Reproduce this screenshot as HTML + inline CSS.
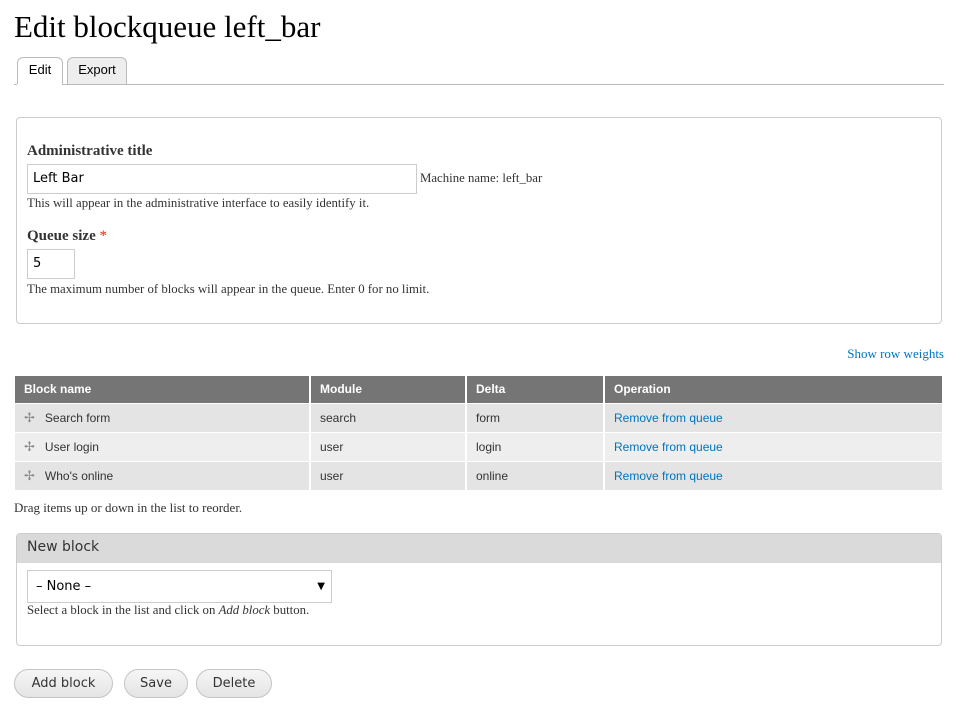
<!DOCTYPE html>
<html><head><meta charset="utf-8"><style>
*{box-sizing:border-box;margin:0;padding:0}
body{width:963px;height:711px;background:#fff;position:relative;font-family:"Liberation Serif",serif;color:#333;overflow:hidden}
.a{position:absolute}
h1{position:absolute;left:14px;top:9px;font-weight:normal;font-size:31px;color:#000;font-family:"Liberation Serif",serif}
.tab{position:absolute;top:57px;height:28px;border:1px solid #bbb;border-bottom:none;border-radius:6px 6px 0 0;font:13px "Liberation Sans",sans-serif;color:#000;text-align:center;line-height:24px}
.fs{position:absolute;border:1px solid #ccc;border-radius:4px}
.lbl{font-weight:bold;font-size:15px;color:#333}
.d{font-size:12.8px;color:#333}
.inp{position:absolute;border:1px solid #ccc;background:#fff;font:13px "DejaVu Sans",sans-serif;color:#000;padding-left:5px;line-height:27px}
table{position:absolute;left:15px;top:376px;width:927px;border-collapse:collapse;font:12px "Liberation Sans",sans-serif}
th{background:#757575;color:#fff;text-align:left;height:27px;padding-left:9px;border-right:2px solid #fff;border-bottom:1px solid #fff}
td{height:29px;padding-left:9px;border-right:2px solid #fff;border-bottom:1px solid #fff;color:#333}
th:last-child,td:last-child{border-right:none}
tr.o td{background:#e4e4e4}tr.e td{background:#eeeeee}
a{color:#0074bd;text-decoration:none}
.btn{position:absolute;top:669px;height:29px;border:1px solid #c4c4c4;border-radius:15px;background:linear-gradient(#f6f6f6,#e4e4e4);font:13px "DejaVu Sans",sans-serif;color:#333;text-align:center;line-height:27px}
</style></head><body>
<h1>Edit blockqueue left_bar</h1>
<div class="tab" style="left:17px;width:46px;background:#fff;height:28px">Edit</div>
<div class="tab" style="left:67px;width:60px;background:#eee;height:27px">Export</div>
<div class="a" style="left:14px;top:84px;width:930px;height:1px;background:#bbb"></div>
<div class="a" style="left:17px;top:84px;width:45px;height:1px;background:#fff"></div>

<div class="fs" style="left:16px;top:117px;width:926px;height:207px"></div>
<div class="a lbl" style="left:27px;top:143px">Administrative title</div>
<div class="inp" style="left:27px;top:164px;width:390px;height:30px">Left Bar</div>
<div class="a d" style="left:420px;top:171px">Machine name: left_bar</div>
<div class="a d" style="left:27px;top:196px">This will appear in the administrative interface to easily identify it.</div>
<div class="a lbl" style="left:27px;top:228px">Queue size <span style="color:#e62600;font-weight:normal">*</span></div>
<div class="inp" style="left:27px;top:249px;width:48px;height:30px">5</div>
<div class="a d" style="left:27px;top:282px">The maximum number of blocks will appear in the queue. Enter 0 for no limit.</div>

<div class="a" style="right:19px;top:346px;font-size:13px"><a>Show row weights</a></div>
<table>
<tr><th style="width:295px">Block name</th><th style="width:156px">Module</th><th style="width:138px">Delta</th><th>Operation</th></tr>
<tr class="o"><td><span style="color:#888;margin-right:10px;font-size:13px">✢</span>Search form</td><td>search</td><td>form</td><td><a>Remove from queue</a></td></tr>
<tr class="e"><td><span style="color:#888;margin-right:10px;font-size:13px">✢</span>User login</td><td>user</td><td>login</td><td><a>Remove from queue</a></td></tr>
<tr class="o"><td><span style="color:#888;margin-right:10px;font-size:13px">✢</span>Who's online</td><td>user</td><td>online</td><td><a>Remove from queue</a></td></tr>
</table>
<div class="a d" style="left:14px;top:500px;font-size:13px">Drag items up or down in the list to reorder.</div>

<div class="fs" style="left:16px;top:533px;width:926px;height:113px;overflow:hidden">
<div style="background:#dadada;height:29px;font:14px 'DejaVu Sans',sans-serif;color:#333;padding-left:10px;line-height:27px">New block</div>
</div>
<div class="inp" style="left:27px;top:570px;width:305px;height:33px;line-height:31px;padding-left:8px">– None –<span style="position:absolute;right:6px;font-size:10px">▼</span></div>
<div class="a d" style="left:27px;top:603px;font-size:12.8px">Select a block in the list and click on <i>Add block</i> button.</div>

<div class="btn" style="left:14px;width:99px">Add block</div>
<div class="btn" style="left:124px;width:64px">Save</div>
<div class="btn" style="left:196px;width:76px">Delete</div>
</body></html>
